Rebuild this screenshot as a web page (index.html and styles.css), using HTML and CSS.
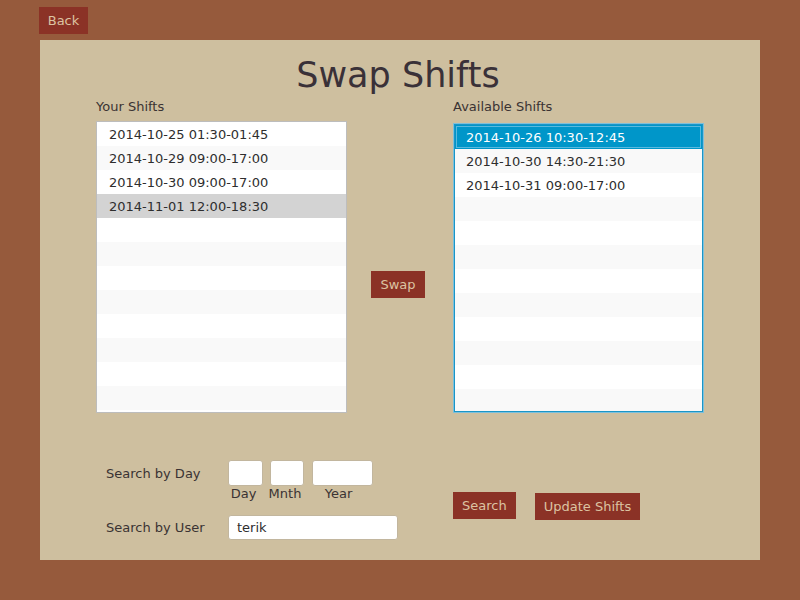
FILE: index.html
```html
<!DOCTYPE html>
<html>
<head>
<meta charset="utf-8">
<link rel="stylesheet" href="styles.css">
</head>
<body>
<button class="btn back">Back</button>
<main class="panel">
  <h1 class="title">Swap Shifts</h1>
  <section class="lists">
    <div class="col">
      <div class="label">Your Shifts</div>
      <ul class="list">
        <li>2014-10-25 01:30-01:45</li>
        <li>2014-10-29 09:00-17:00</li>
        <li>2014-10-30 09:00-17:00</li>
        <li class="sel">2014-11-01 12:00-18:30</li>
        <li></li><li></li><li></li><li></li><li></li><li></li><li></li><li></li><li></li>
      </ul>
    </div>
    <button class="btn swap">Swap</button>
    <div class="col">
      <div class="label">Available Shifts</div>
      <ul class="list focused">
        <li class="sel">2014-10-26 10:30-12:45</li>
        <li>2014-10-30 14:30-21:30</li>
        <li>2014-10-31 09:00-17:00</li>
        <li></li><li></li><li></li><li></li><li></li><li></li><li></li><li></li><li></li>
      </ul>
    </div>
  </section>
  <section class="bottom">
    <div class="search">
      <div class="flabel day-label">Search by Day</div>
      <div class="date">
        <div class="part p-day"><input class="field" type="text"><span>Day</span></div>
        <div class="part p-month"><input class="field" type="text"><span>Mnth</span></div>
        <div class="part p-year"><input class="field" type="text"><span>Year</span></div>
      </div>
      <div class="flabel user-label">Search by User</div>
      <input class="field user" type="text" value="terik">
    </div>
    <div class="actions">
      <button class="btn">Search</button>
      <button class="btn update">Update Shifts</button>
    </div>
  </section>
</main>
</body>
</html>
```
FILE: styles.css
```css
* { box-sizing: border-box; }
html, body { margin: 0; padding: 0; }
body {
  background: #965a3c;
  font-family: "DejaVu Sans", Verdana, sans-serif;
  font-size: 13px;
  width: 800px;
  height: 600px;
  overflow: hidden;
}
.btn {
  display: inline-block;
  background: #8b3226;
  color: #dcc3a2;
  border: 0;
  border-radius: 0;
  font-family: "DejaVu Sans", Verdana, sans-serif;
  font-size: 13px;
  height: 27px;
  line-height: 27px;
  padding: 0 9px;
  margin: 0;
}
.back {
  display: block;
  margin: 7px 0 0 39px;
  width: 49px;
  padding: 0;
}
.panel {
  margin: 6px 0 0 40px;
  width: 720px;
  height: 520px;
  background: #cebf9f;
  padding: 15px 0 0 56px;
}
.title {
  margin: 0 0 0 -56px;
  font-weight: normal;
  font-size: 35px;
  line-height: 41px;
  text-align: center;
  color: #3a3138;
  width: 720px;
  transform: translateX(-2px);
}
.lists {
  display: flex;
  align-items: flex-start;
  margin-top: 3px;
}
.col { width: 251px; }
.label {
  line-height: 15px;
  color: #3a3333;
}
.list {
  list-style: none;
  margin: 7px 0 0 0;
  padding: 0;
  height: 292px;
  border: 1px solid #bdbdbd;
  background: #fff;
  overflow: hidden;
}
.list li {
  height: 24px;
  line-height: 26px;
  overflow: hidden;
  padding-left: 12px;
  color: #2e2e2e;
  background: #fff;
}
.list li:nth-child(even) { background: #f9f9f9; }
.list li.sel { background: #d3d3d3; }
.list.focused {
  margin: 10px 1px 0 1px;
  width: 249px;
  height: 288px;
  border: 1px solid #1b95c6;
  box-shadow: 0 0 0 1px #7cc0dc;
}
.list.focused li { padding-left: 11px; }
.list.focused li.sel {
  background: #0096c9;
  color: #fff;
  box-shadow: inset 0 0 0 1px #0096c9, inset 0 0 0 2px #5ab9de;
}
.swap {
  margin: 172px 28px 0 24px;
  width: 54px;
  padding: 0;
}
.bottom {
  display: flex;
  align-items: flex-start;
  margin-top: 47px;
  padding-left: 10px;
}
.search {
  display: grid;
  grid-template-columns: 122px auto;
  row-gap: 14px;
  width: 347px;
}
.flabel {
  color: #3a3333;
  line-height: 15px;
  align-self: center;
}
.flabel.day-label {
  align-self: start;
  padding-top: 6px;
}
.flabel.user-label { margin-top: -1px; }
.date { display: flex; }
.part {
  display: flex;
  flex-direction: column;
  color: #3a3333;
  line-height: 15px;
}
.part span {
  display: block;
  text-align: center;
  white-space: nowrap;
  transform: translateX(-2px);
}
.p-day { width: 35px; }
.p-month { width: 34px; margin: 0 8px 0 7px; }
.p-year { width: 61px; }
.p-year span { transform: translateX(-4px); }
.field {
  background: #fff;
  border: 1px solid #c2b69e;
  border-radius: 3px;
  height: 26px;
  width: 100%;
  font-family: "DejaVu Sans", Verdana, sans-serif;
  font-size: 13px;
  color: #2e2e2e;
  margin: 0;
  outline: none;
}
.field.user {
  width: 170px;
  height: 25px;
  padding: 0 8px;
}
.actions {
  display: flex;
  align-items: flex-start;
  gap: 19px;
  margin-top: 32px;
}
.update { margin-top: 1px; }
```
